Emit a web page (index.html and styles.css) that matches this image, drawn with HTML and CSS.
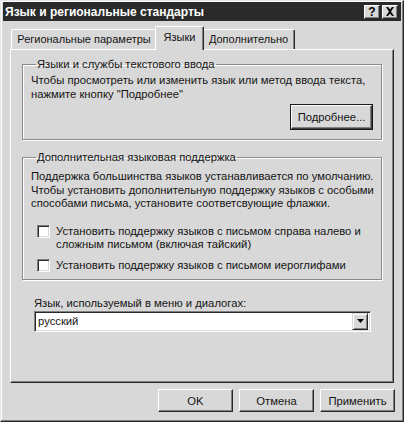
FILE: index.html
```html
<!DOCTYPE html>
<html lang="ru">
<head>
<meta charset="utf-8">
<title>Язык и региональные стандарты</title>
<link rel="stylesheet" href="styles.css">
</head>
<body>
<div class="window">
  <div class="titlebar">
    <span class="title">Язык и региональные стандарты</span>
    <div class="tbtns">
      <span class="tbtn help">?</span>
      <span class="tbtn close"><svg width="10" height="9" viewBox="0 0 10 9"><path d="M1 0h2l2 2.5L7 0h2L6 4.5 9 9H7L5 6.5 3 9H1l3-4.5z" fill="#000"/></svg></span>
    </div>
  </div>
  <div class="tabs">
    <div class="tab t1">Региональные параметры</div>
    <div class="tab active">Языки</div>
    <div class="tab t3">Дополнительно</div>
  </div>
  <div class="panel">
    <fieldset class="group g1">
      <legend>Языки и службы текстового ввода</legend>
      <p class="txt">Чтобы просмотреть или изменить язык или метод ввода текста,<br>нажмите кнопку "Подробнее"</p>
      <div class="right"><span class="btn default">Подробнее...</span></div>
    </fieldset>
    <fieldset class="group g2">
      <legend>Дополнительная языковая поддержка</legend>
      <p class="txt t2">Поддержка большинства языков устанавливается по умолчанию.<br>Чтобы установить дополнительную поддержку языков с особыми<br>способами письма, установите соответсвующие флажки.</p>
      <div class="check c1"><span class="box"></span><span class="ctext">Установить поддержку языков с письмом справа налево и<br>сложным письмом (включая тайский)</span></div>
      <div class="check c2"><span class="box"></span><span class="ctext">Установить поддержку языков с письмом иероглифами</span></div>
    </fieldset>
    <div class="uilang">
      <div class="label">Язык, используемый в меню и диалогах:</div>
      <div class="combo">
        <span class="cval">русский</span>
        <span class="cbtn"><svg width="7" height="4" viewBox="0 0 7 4"><path d="M0 0h7L3.5 4z" fill="#000"/></svg></span>
      </div>
    </div>
  </div>
  <div class="buttons">
    <span class="btn">OK</span>
    <span class="btn">Отмена</span>
    <span class="btn">Применить</span>
  </div>
</div>
</body>
</html>
```
FILE: styles.css
```css
html, body {
  margin: 0;
  padding: 0;
  background: #d8d8d8;
}
body {
  font-family: "Liberation Sans", Arial, sans-serif;
  font-size: 11.25px;
  color: #141414;
}
.window {
  width: 404px;
  height: 422px;
  box-sizing: border-box;
  background: #d8d8d8;
  border-top: 1px solid #e6e6e6;
  border-left: 1px solid #e6e6e6;
  border-right: 1px solid #2a2a2a;
  border-bottom: 1px solid #2a2a2a;
  box-shadow: inset -1px -1px #808080, inset 1px 1px #fff;
  padding: 1px 2px 2px 2px;
  display: flex;
  flex-direction: column;
}
.titlebar {
  height: 19px;
  background: #2a2a2a;
  display: flex;
  align-items: center;
  justify-content: space-between;
  padding: 0 3px 0 2px;
}
.title {
  color: #fff;
  font-weight: bold;
  font-size: 12px;
  margin-top: 1px;
}
.tbtns {
  display: flex;
  gap: 2px;
}
.tbtn {
  width: 16px;
  height: 14px;
  box-sizing: border-box;
  background: #d8d8d8;
  border: 1px solid;
  border-color: #fff #2a2a2a #2a2a2a #fff;
  box-shadow: inset -1px -1px #808080;
  display: flex;
  align-items: center;
  justify-content: center;
  font-weight: bold;
  font-size: 12px;
  color: #000;
  line-height: 1;
}
.tabs {
  display: flex;
  align-items: flex-end;
  height: 23px;
  margin-top: 5px;
  padding-left: 8px;
}
.tab {
  height: 20px;
  box-sizing: border-box;
  border: 1px solid;
  border-bottom: none;
  border-color: #fff #2a2a2a transparent #fff;
  box-shadow: inset -1px 0 #808080;
  border-radius: 2px 2px 0 0;
  padding-top: 3px;
  white-space: nowrap;
  text-align: center;
  font-size: 11px;
}
.tab.t1 { width: 146px; }
.tab.t3 { width: 93px; }
.tab.active {
  width: 49px;
  height: 24px;
  margin: 0 -2px 0 -2px;
  position: relative;
  z-index: 1;
  background: #d8d8d8;
  padding-top: 4px;
  top: 1px;
}
.panel {
  margin: 0 7px;
  height: 334px;
  box-sizing: border-box;
  border: 1px solid;
  border-color: #fff #2a2a2a #2a2a2a #fff;
  box-shadow: inset -1px -1px #808080;
  padding: 7px 11px 0 11px;
}
.group {
  margin: 0;
  min-width: 0;
  border: 1px solid #8a8a8a;
  box-shadow: inset 1px 1px #fff, 1px 1px #fff;
  padding: 0 9px 10px 8px;
}
.group legend {
  padding: 0 1px;
  margin-left: 5px;
  line-height: 14px;
}
.txt {
  margin: 2px 0 0 0;
  line-height: 14px;
  white-space: nowrap;
}
.g1 .right {
  display: flex;
  justify-content: flex-end;
  margin-top: 4px;
}
.btn {
  width: 75px;
  height: 23px;
  box-sizing: border-box;
  border: 1px solid;
  border-color: #fff #2a2a2a #2a2a2a #fff;
  box-shadow: inset -1px -1px #808080;
  display: flex;
  align-items: center;
  justify-content: center;
  background: #d8d8d8;
}
.btn.default {
  width: 81px;
  height: 24px;
  outline: 1px solid #1a1a1a;
  outline-offset: 0;
  border-color: #fff #404040 #404040 #fff;
}
.g2 {
  margin-top: 10px;
  padding-bottom: 7px;
}
.txt.t2 {
  margin-top: 6px;
  line-height: 13.5px;
}
.check {
  display: flex;
  align-items: flex-start;
  margin-left: 6px;
  line-height: 13px;
  white-space: nowrap;
}
.check.c1 { margin-top: 14px; }
.check.c2 { margin-top: 8px; }
.box {
  width: 13px;
  height: 13px;
  box-sizing: border-box;
  background: #fff;
  border: 1px solid;
  border-color: #808080 #fff #fff #808080;
  box-shadow: inset 1px 1px #2a2a2a, inset -1px -1px #d8d8d8;
  flex: none;
  margin-right: 6px;
}
.uilang {
  padding: 16px 11px 0 12px;
}
.label {
  line-height: 14px;
}
.combo {
  margin-top: 1px;
  height: 21px;
  box-sizing: border-box;
  background: #fff;
  border: 1px solid;
  border-color: #808080 #fff #fff #808080;
  box-shadow: inset 1px 1px #2a2a2a, inset -1px -1px #d8d8d8;
  display: flex;
  align-items: center;
  justify-content: space-between;
  padding: 2px 2px 2px 3px;
}
.cbtn {
  width: 16px;
  height: 17px;
  box-sizing: border-box;
  background: #d8d8d8;
  border: 1px solid;
  border-color: #d8d8d8 #2a2a2a #2a2a2a #d8d8d8;
  box-shadow: inset 1px 1px #fff, inset -1px -1px #808080;
  display: flex;
  align-items: center;
  justify-content: center;
}
.buttons {
  display: flex;
  justify-content: flex-end;
  gap: 6px;
  margin-top: 6px;
  padding-right: 6px;
}
```
